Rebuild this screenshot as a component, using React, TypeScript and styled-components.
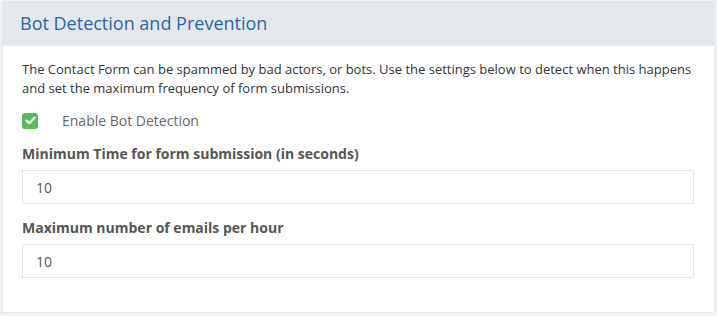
import styled, { createGlobalStyle } from "styled-components";

const GlobalStyle = createGlobalStyle`
  html, body {
    margin: 0;
    padding: 0;
    background: #f1f2f4;
  }
  body {
    font-family: "Open Sans", "Liberation Sans", sans-serif;
  }
`;

const Page = styled.div`
  padding: 1px 2px 0 2px;
`;

const Panel = styled.div`
  background: #fff;
  border: 1px solid #e6e8eb;
  border-top: none;
  border-radius: 2px;
  box-shadow: 0 3px 0 #e1e4e8;
  height: 312px;
  box-sizing: border-box;
`;

const PanelHeader = styled.div`
  background: #e5e8eb;
  height: 44px;
  padding: 0 17px;
  display: flex;
  align-items: center;
  border-bottom: 1px solid #eef0f2;
`;

const Title = styled.h3`
  margin: 0;
  font-size: 18px;
  font-weight: 400;
  color: #2a65a6;
`;

const PanelBody = styled.div`
  padding: 14px 20px 0 19px;
`;

const Intro = styled.p`
  margin: 0;
  font-size: 13px;
  line-height: 19px;
  color: #333;
`;

const CheckRow = styled.label`
  display: flex;
  align-items: center;
  gap: 24px;
  margin-top: 13px;
  font-size: 14px;
  color: #666;
`;

const CheckBox = styled.span`
  width: 16px;
  height: 16px;
  border-radius: 3px;
  background: #5cb85c;
  display: flex;
  align-items: center;
  justify-content: center;
`;

const Field = styled.div<{ $top: number }>`
  margin-top: ${(p) => p.$top}px;
`;

const FieldLabel = styled.div`
  font-size: 14px;
  font-weight: 700;
  color: #555;
  line-height: 20px;
`;

const Input = styled.input`
  display: block;
  box-sizing: border-box;
  width: 100%;
  height: 34px;
  margin-top: 6px;
  padding: 0 13px;
  border: 1px solid #e3e3e3;
  font-family: "Open Sans", "Liberation Sans", sans-serif;
  font-size: 14px;
  color: #555;
  outline: none;
`;

export default function App() {
  return (
    <>
      <GlobalStyle />
      <Page>
        <Panel>
          <PanelHeader>
            <Title>Bot Detection and Prevention</Title>
          </PanelHeader>
          <PanelBody>
            <Intro>
              The Contact Form can be spammed by bad actors, or bots. Use the settings below to detect
              when this happens and set the maximum frequency of form submissions.
            </Intro>
            <CheckRow>
              <CheckBox>
                <svg width="11" height="9" viewBox="0 0 11 9">
                  <path d="M1.5 4.6 L4.2 7.2 L9.5 1.8" fill="none" stroke="#fff" strokeWidth="2.2" strokeLinecap="round" strokeLinejoin="round" />
                </svg>
              </CheckBox>
              Enable Bot Detection
            </CheckRow>
            <Field $top={14}>
              <FieldLabel>Minimum Time for form submission (in seconds)</FieldLabel>
              <Input defaultValue="10" />
            </Field>
            <Field $top={14}>
              <FieldLabel>Maximum number of emails per hour</FieldLabel>
              <Input defaultValue="10" />
            </Field>
          </PanelBody>
        </Panel>
      </Page>
    </>
  );
}
